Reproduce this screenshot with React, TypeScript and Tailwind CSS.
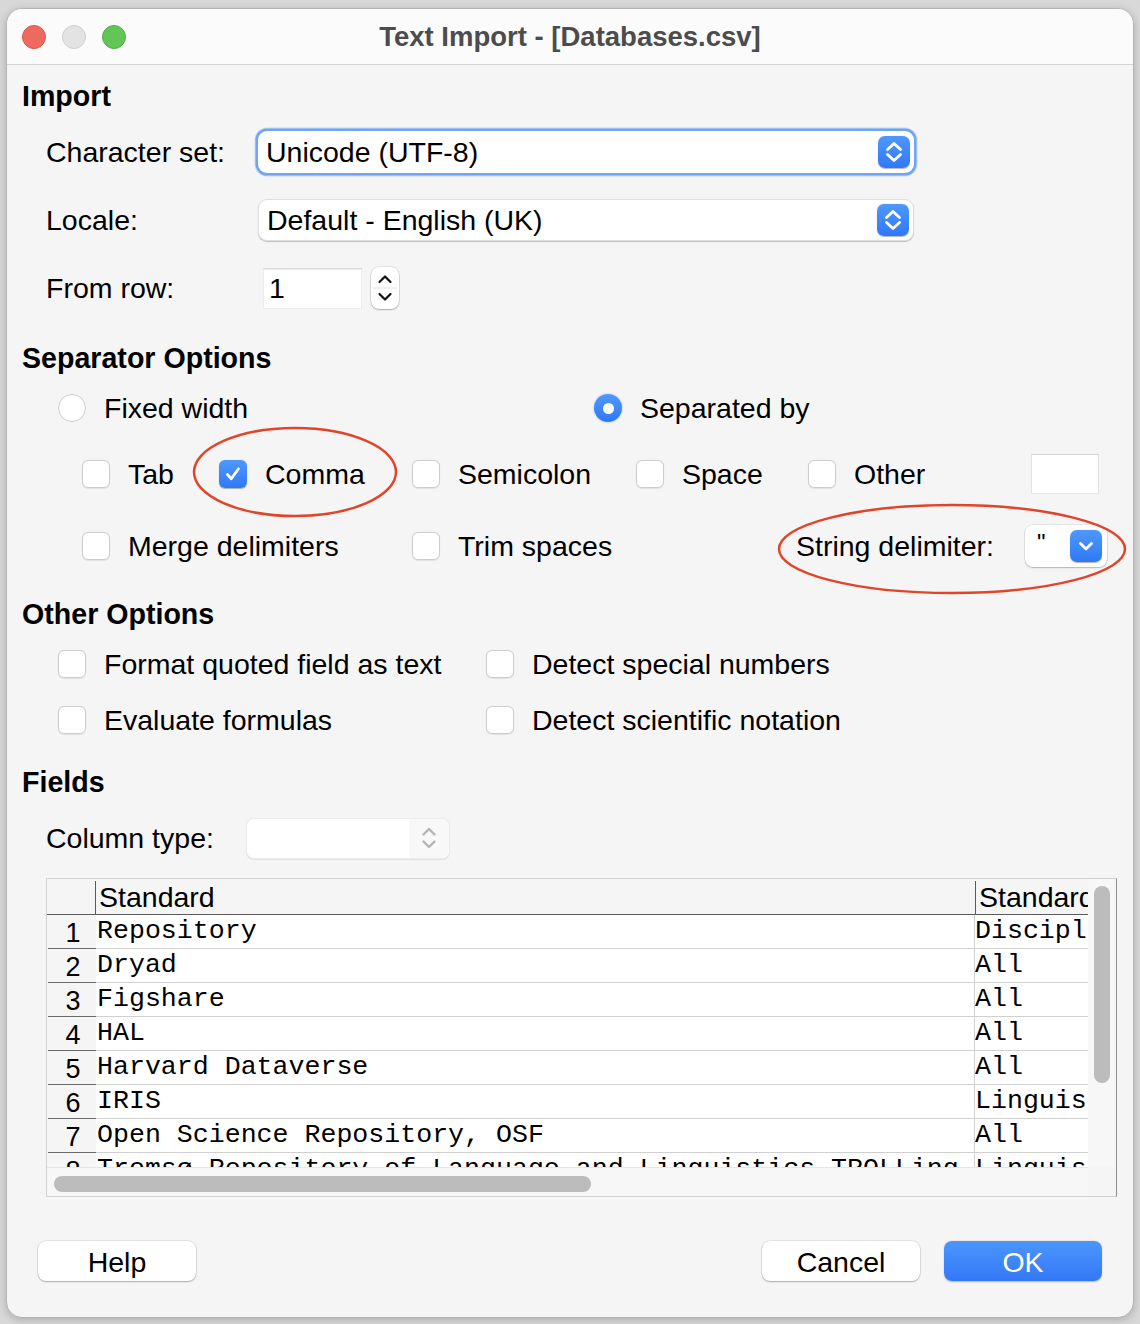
import React from 'react';

// Text Import dialog (LibreOffice on macOS)

const sans = "font-['Liberation_Sans',Arial,sans-serif]";
const mono = "font-['Liberation_Mono','Courier_New',monospace]";

function UpDown({ color = 'white', width = 2.8 }: { color?: string; width?: number }) {
  return (
    <svg width="32" height="32" viewBox="0 0 32 32" fill="none">
      <path d="M9.5 13.5 L16 7.5 L22.5 13.5" stroke={color} strokeWidth={width} strokeLinecap="round" strokeLinejoin="round" />
      <path d="M9.5 18.5 L16 24.5 L22.5 18.5" stroke={color} strokeWidth={width} strokeLinecap="round" strokeLinejoin="round" />
    </svg>
  );
}

function BlueButton({ down = false }: { down?: boolean }) {
  return (
    <div className="w-[32px] h-[32px] rounded-[7px] bg-gradient-to-b from-[#4f98fd] to-[#2f78f5] flex items-center justify-center shadow-[0_0.5px_1px_rgba(0,0,0,0.3)]">
      {down ? (
        <svg width="32" height="32" viewBox="0 0 32 32" fill="none">
          <path d="M10.5 13.5 L16 19 L21.5 13.5" stroke="white" strokeWidth="2.8" strokeLinecap="round" strokeLinejoin="round" />
        </svg>
      ) : (
        <UpDown />
      )}
    </div>
  );
}

function Heading({ children, className = '' }: { children: React.ReactNode; className?: string }) {
  return <div className={`h-[34px] leading-[34px] pl-[15px] text-[28.6px] font-bold text-black ${className}`}>{children}</div>;
}

function Checkbox({ checked = false }: { checked?: boolean }) {
  if (checked) {
    return (
      <div className="w-[28px] h-[28px] shrink-0 rounded-[6px] bg-gradient-to-b from-[#4f98fd] to-[#2f78f5] flex items-center justify-center shadow-[0_0.5px_1px_rgba(0,0,0,0.3)]">
        <svg width="20" height="20" viewBox="0 0 20 20" fill="none">
          <path d="M4.5 10.5 L8.3 14.8 L15.5 4.8" stroke="white" strokeWidth="2.8" strokeLinecap="round" strokeLinejoin="round" />
        </svg>
      </div>
    );
  }
  return <div className="w-[28px] h-[28px] shrink-0 rounded-[6px] bg-white border border-[#cdcdcd] shadow-[0_0.5px_1px_rgba(0,0,0,0.08)]" />;
}

function Radio({ checked = false }: { checked?: boolean }) {
  if (checked) {
    return (
      <div className="w-[28px] h-[28px] shrink-0 rounded-full bg-gradient-to-b from-[#4f98fd] to-[#2f78f5] flex items-center justify-center shadow-[0_0_2px_rgba(47,120,245,0.5)]">
        <div className="w-[11px] h-[11px] rounded-full bg-white" />
      </div>
    );
  }
  return <div className="w-[28px] h-[28px] shrink-0 rounded-full bg-white border border-[#cdcdcd]" />;
}

function Check({ label, checked = false, w }: { label: string; checked?: boolean; w: string }) {
  return (
    <div className={`flex items-center gap-[18px] ${w}`}>
      <Checkbox checked={checked} />
      <span className="text-[28.5px] leading-none">{label}</span>
    </div>
  );
}

function Select({ value, focused = false }: { value: string; focused?: boolean }) {
  return (
    <div
      className={`w-[656px] h-[42px] rounded-[9px] bg-white flex items-center justify-between pl-[8px] pr-[4px] ${
        focused
          ? 'shadow-[0_0_0_2.5px_#6fa5f2,0_0_0_3.5px_rgba(111,165,242,0.35)]'
          : 'border border-[#dedede] shadow-[0_1px_1px_rgba(0,0,0,0.22)]'
      }`}
    >
      <span className="text-[28.5px] leading-none">{value}</span>
      <BlueButton />
    </div>
  );
}

const rows: [string, string][] = [
  ['Repository', 'Discipline'],
  ['Dryad', 'All'],
  ['Figshare', 'All'],
  ['HAL', 'All'],
  ['Harvard Dataverse', 'All'],
  ['IRIS', 'Linguistics'],
  ['Open Science Repository, OSF', 'All'],
  ['Tromsø Repository of Language and Linguistics TROLLing', 'Linguistics'],
  ['Zenodo', 'All'],
];

function PreviewTable() {
  return (
    <div className="ml-[39px] w-[1071px] h-[319px] border border-[#d2d2d2] border-r-[#8e8e8e] bg-[#f5f5f5] flex flex-col">
      <div className="flex h-[288px]">
        <div className="w-[1041px] h-full overflow-hidden flex flex-col">
          {/* header */}
          <div className="flex h-[36px] shrink-0 border-b border-[#5a5a5a]">
            <div className="w-[49px] shrink-0 border-r border-[#5a5a5a] mt-[2px]" />
            <div className="w-[880px] shrink-0 border-r border-[#5a5a5a] mt-[2px] pl-[3px] flex items-center">
              <span className="text-[28.5px] leading-none">Standard</span>
            </div>
            <div className="flex-1 overflow-hidden pl-[3px] mt-[2px] flex items-center">
              <span className="text-[28.5px] leading-none whitespace-nowrap">Standard</span>
            </div>
          </div>
          {rows.map(([a, b], i) => (
            <div key={i} className="flex h-[34px] shrink-0">
              <div className="w-[49px] shrink-0 ml-[1px] -mr-[1px] border-r border-[#6a6a6a] border-b border-b-[#6a6a6a] bg-[#f5f5f5] flex items-center justify-center">
                <span className="text-[27px] leading-none pl-[2px] pt-[3px]">{i + 1}</span>
              </div>
              <div className="flex flex-1 bg-white border-b border-[#d0d0d0]">
                <div className={`w-[879px] shrink-0 border-r border-[#d0d0d0] overflow-hidden whitespace-nowrap flex items-center pl-[1px] ${mono}`}>
                  <span className="text-[26.6px] leading-none">{a}</span>
                </div>
                <div className={`flex-1 overflow-hidden whitespace-nowrap flex items-center ${mono}`}>
                  <span className="text-[26.6px] leading-none">{b}</span>
                </div>
              </div>
            </div>
          ))}
        </div>
        {/* vertical scrollbar */}
        <div className="flex-1 bg-[#f7f7f7] pt-[7px] flex justify-center">
          <div className="w-[16px] h-[197px] rounded-full bg-[#bcbcbc]" />
        </div>
      </div>
      {/* horizontal scrollbar */}
      <div className="flex flex-1">
        <div className="w-[1041px] bg-[#f7f7f7] border-t border-[#e6e6e6] pl-[7px] pt-[8px]">
          <div className="w-[537px] h-[16px] rounded-full bg-[#bcbcbc]" />
        </div>
        <div className="flex-1 bg-[#f5f5f5]" />
      </div>
    </div>
  );
}

function PushButton({ label, primary = false }: { label: string; primary?: boolean }) {
  return (
    <div
      className={`w-[158px] h-[40px] rounded-[8px] flex items-center justify-center text-[28.5px] leading-none pt-[2px] ${
        primary
          ? 'bg-gradient-to-b from-[#4c95fd] to-[#3478f6] text-white shadow-[0_0.5px_1.5px_rgba(0,0,0,0.25)]'
          : 'bg-white text-black shadow-[0_0_0_0.5px_rgba(0,0,0,0.14),0_1px_1.5px_rgba(0,0,0,0.25)]'
      }`}
    >
      {label}
    </div>
  );
}

export default function App() {
  return (
    <div className={`w-[1140px] h-[1324px] bg-[#d8d8d8] pt-[8px] pl-[6px] text-black ${sans}`}>
      <div className="relative w-[1128px] h-[1310px] rounded-[16px] border border-[#b4b4b4] bg-[#f5f5f5] overflow-hidden flex flex-col shadow-[0_2px_8px_rgba(0,0,0,0.2)]">
        {/* title bar */}
        <div className="h-[56px] shrink-0 bg-[#fbfbfb] border-b border-[#d6d6d6] grid grid-cols-[1fr_auto_1fr] items-center">
          <div className="flex items-center gap-[16px] pl-[15px]">
            <div className="w-[24px] h-[24px] rounded-full bg-[#ee6a5f] border border-[#d8584d]" />
            <div className="w-[24px] h-[24px] rounded-full bg-[#e3e3e3] border border-[#cfcfcf]" />
            <div className="w-[24px] h-[24px] rounded-full bg-[#62c655] border border-[#53ad47]" />
          </div>
          <div className="text-[27.5px] font-bold text-[#4c4c4c] leading-none">Text Import - [Databases.csv]</div>
          <div />
        </div>

        {/* body */}
        <div className="flex flex-col">
          <Heading className="mt-[14px]">Import</Heading>
          <div className="mt-[5px] h-[68px] flex items-center pl-[39px]">
            <div className="w-[212px] text-[28.5px] leading-none">Character set:</div>
            <Select value="Unicode (UTF-8)" focused />
          </div>
          <div className="h-[68px] flex items-center pl-[39px]">
            <div className="w-[212px] text-[28.5px] leading-none">Locale:</div>
            <Select value="Default - English (UK)" />
          </div>
          <div className="h-[68px] flex items-center pl-[39px]">
            <div className="w-[217px] text-[28.5px] leading-none">From row:</div>
            <div className="w-[99px] h-[41px] bg-white border-t border-[#dcdcdc] shadow-[inset_0_0_0_1px_#ececec] flex items-center pl-[6px]">
              <span className="text-[28.5px] leading-none">1</span>
            </div>
            <div className="ml-[9px] w-[28px] h-[42px] rounded-[8px] bg-white shadow-[0_0_0_0.5px_rgba(0,0,0,0.15),0_1px_1.5px_rgba(0,0,0,0.25)] flex flex-col items-center justify-center">
              <svg width="28" height="42" viewBox="0 0 28 42" fill="none">
                <path d="M8.5 15 L14 9.5 L19.5 15" stroke="#111" strokeWidth="2.2" strokeLinecap="round" strokeLinejoin="round" />
                <line x1="2" y1="21" x2="26" y2="21" stroke="#e4e4e4" strokeWidth="1" />
                <path d="M8.5 27 L14 32.5 L19.5 27" stroke="#111" strokeWidth="2.2" strokeLinecap="round" strokeLinejoin="round" />
              </svg>
            </div>
          </div>

          <Heading className="mt-[19px]">Separator Options</Heading>
          <div className="mt-[8px] h-[50px] flex items-center pl-[51px]">
            <div className="flex items-center gap-[18px] w-[536px]">
              <Radio />
              <span className="text-[28.5px] leading-none">Fixed width</span>
            </div>
            <div className="flex items-center gap-[18px]">
              <Radio checked />
              <span className="text-[28.5px] leading-none">Separated by</span>
            </div>
          </div>
          <div className="mt-[5px] h-[72px] flex items-center pl-[75px]">
            <Check label="Tab" w="w-[137px]" />
            <Check label="Comma" checked w="w-[193px]" />
            <Check label="Semicolon" w="w-[224px]" />
            <Check label="Space" w="w-[172px]" />
            <Check label="Other" w="w-[223px]" />
            <div className="w-[68px] h-[40px] bg-white border border-[#e4e4e4] border-t-[#d6d6d6]" />
          </div>
          <div className="h-[72px] flex items-center pl-[75px]">
            <Check label="Merge delimiters" w="w-[330px]" />
            <Check label="Trim spaces" w="w-[384px]" />
            <div className="w-[229px] text-[28.5px] leading-none">String delimiter:</div>
            <div className="w-[82px] h-[42px] rounded-[8px] bg-white shadow-[0_0_0_0.5px_rgba(0,0,0,0.12),0_1px_1.5px_rgba(0,0,0,0.22)] flex items-center justify-between pl-[12px] pr-[5px]">
              <span className="text-[24px] leading-none pb-[6px]">"</span>
              <BlueButton down />
            </div>
          </div>

          <Heading className="mt-[15px]">Other Options</Heading>
          <div className="mt-[5px] h-[56px] flex items-center pl-[51px]">
            <Check label="Format quoted field as text" w="w-[428px]" />
            <Check label="Detect special numbers" w="w-[400px]" />
          </div>
          <div className="h-[56px] flex items-center pl-[51px]">
            <Check label="Evaluate formulas" w="w-[428px]" />
            <Check label="Detect scientific notation" w="w-[400px]" />
          </div>

          <Heading className="mt-[17px]">Fields</Heading>
          <div className="mt-[11px] h-[56px] flex items-center pl-[39px]">
            <div className="w-[200px] text-[28.5px] leading-none">Column type:</div>
            <div className="w-[204px] h-[41px] rounded-[8px] bg-white border border-[#ececec] shadow-[0_0.5px_1px_rgba(0,0,0,0.08)] flex overflow-hidden">
              <div className="flex-1" />
              <div className="w-[40px] bg-[#f8f8f8] flex items-center justify-center">
                <svg width="20" height="30" viewBox="0 0 20 30" fill="none">
                  <path d="M4.5 11.5 L10 6 L15.5 11.5" stroke="#b4b4b4" strokeWidth="2.4" strokeLinecap="round" strokeLinejoin="round" />
                  <path d="M4.5 18.5 L10 24 L15.5 18.5" stroke="#b4b4b4" strokeWidth="2.4" strokeLinecap="round" strokeLinejoin="round" />
                </svg>
              </div>
            </div>
          </div>

          <div className="mt-[12px]">
            <PreviewTable />
          </div>

          <div className="mt-[44px] flex items-center pl-[31px] pr-[31px]">
            <PushButton label="Help" />
            <div className="flex-1" />
            <PushButton label="Cancel" />
            <div className="w-[24px]" />
            <PushButton label="OK" primary />
          </div>
        </div>

        {/* red annotation ellipses */}
        <svg className="absolute left-[185px] top-[417px] pointer-events-none" width="206" height="92" viewBox="0 0 206 92" fill="none">
          <ellipse cx="103" cy="46" rx="101" ry="44" stroke="#e2442a" strokeWidth="2.5" />
        </svg>
        <svg className="absolute left-[770px] top-[494px] pointer-events-none" width="350" height="92" viewBox="0 0 350 92" fill="none">
          <ellipse cx="175" cy="46" rx="173" ry="44" stroke="#e2442a" strokeWidth="2.5" />
        </svg>
      </div>
    </div>
  );
}
